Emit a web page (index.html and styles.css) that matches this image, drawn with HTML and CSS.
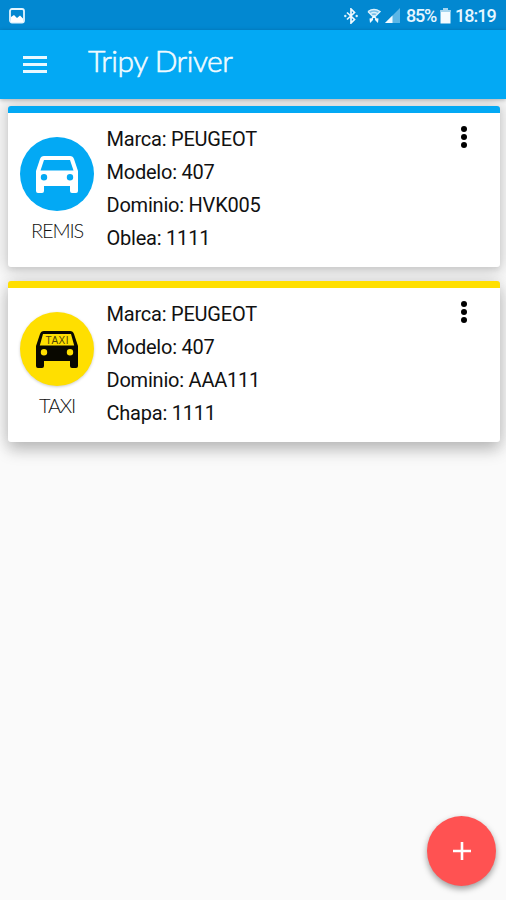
FILE: index.html
```html
<!DOCTYPE html>
<html lang="es">
<head>
<meta charset="utf-8">
<title>Tripy Driver</title>
<link rel="stylesheet" href="styles.css">
</head>
<body>
<div class="status">
  <svg class="picture" width="16" height="16" viewBox="0 0 16 16"><rect x="1" y="1" width="14" height="13.500" rx="2" fill="none" stroke="#e4f5ff" stroke-width="1.800"/><path d="M2 14V9l3-2 3 3 3-2.500 3 3V14z" fill="#fff"/></svg>
  <div class="tray">
    <svg class="bluetooth" width="16" height="16" viewBox="0 0 16 16"><path d="M4 4.500l7.500 7L8 15V1l3.500 3.500L4 11.500" fill="none" stroke="#eef9ff" stroke-width="1.700"/><circle cx="2.300" cy="8" r="1.200" fill="#d9f0fc"/><circle cx="13.700" cy="8" r="1.200" fill="#d9f0fc"/></svg>
    <svg class="wifi" width="16" height="16" viewBox="0 0 16 16"><path d="M2 4Q8-.5 14 4L8 10.500z" fill="#73bee8"/><path d="M2 3.500Q8-.5 14 3.500L9.500 8h-3L2 3.500M4.500 5.500Q8 3.500 11.500 5.500" fill="none" stroke="#d9f0fc" stroke-width="1.400"/><path d="M8 7l2.500 3H5.500zM3.500 10.500L7 10v2l-3 3zM9 10l3.500.5-.5 4.500-3-3z" fill="#eef9ff"/></svg>
    <svg class="signal" width="16" height="16" viewBox="0 0 16 16"><path d="M0 15L15 0v15z" fill="#5cb6e6"/><path d="M0 15L7.500 7.500V15z" fill="#f2faff"/></svg>
    <span class="percent">85%</span>
    <svg class="battery" width="11" height="16" viewBox="0 0 11 16"><path d="M3 0h5v2h2.500v13.500H.5V2H3z" fill="#f4fbff"/><path d="M3 0h5v2h2.500v2H.5V2H3z" fill="#a5d5ef"/></svg>
    <span class="clock">18:19</span>
  </div>
</div>
<header class="appbar">
  <div class="burger"><i></i><i></i><i></i></div>
  <h1>Tripy Driver</h1>
</header>
<main class="list">
  <article class="card remis">
    <div class="kind">
      <div class="badge">
        <svg width="42" height="37" viewBox="0 0 42 37"><path fill-rule="evenodd" d="M8 0h26q3 0 4 3l4 12v20q0 2-2 2h-4q-2 0-2-2v-5H8v5q0 2-2 2H2q-2 0-2-2V15L4 3q1-3 4-3zM8 4L4.500 14.500h33L34 4zM8 18a3.200 3.200 0 1 0 0 6.400a3.200 3.200 0 1 0 0-6.400zM34 18a3.200 3.200 0 1 0 0 6.400a3.200 3.200 0 1 0 0-6.400z" fill="#fff"/></svg>
      </div>
      <span class="label">REMIS</span>
    </div>
    <div class="details">
      <p>Marca: PEUGEOT</p><p>Modelo: 407</p><p>Dominio: HVK005</p><p>Oblea: 1111</p>
    </div>
    <div class="more"><i></i><i></i><i></i></div>
  </article>
  <article class="card taxi">
    <div class="kind">
      <div class="badge">
        <svg width="42" height="37" viewBox="0 0 42 37"><path fill-rule="evenodd" d="M8 0h26q3 0 4 3l4 12v20q0 2-2 2h-4q-2 0-2-2v-5H8v5q0 2-2 2H2q-2 0-2-2V15L4 3q1-3 4-3zM7 3L3.800 14.500h34.400L35 3zM8 18a3.200 3.200 0 1 0 0 6.400a3.200 3.200 0 1 0 0-6.400zM34 18a3.200 3.200 0 1 0 0 6.400a3.200 3.200 0 1 0 0-6.400z" fill="#090800"/><text class="sign" x="21" y="12.800" text-anchor="middle" textLength="23">TAXI</text></svg>
      </div>
      <span class="label">TAXI</span>
    </div>
    <div class="details">
      <p>Marca: PEUGEOT</p><p>Modelo: 407</p><p>Dominio: AAA111</p><p>Chapa: 1111</p>
    </div>
    <div class="more"><i></i><i></i><i></i></div>
  </article>
</main>
<div class="fab"><svg width="18" height="18" viewBox="0 0 18 18"><path d="M9 0v18M0 9h18" stroke="#fff" stroke-width="2.600"/></svg></div>
</body>
</html>
```
FILE: styles.css
```css
* { box-sizing: border-box; }
body {
  margin: 0;
  height: 900px;
  overflow: hidden;
  background: #fafafa;
  font-family: Roboto, "Liberation Sans", sans-serif;
  color: #111;
}
.status {
  height: 30px;
  background: #0288d1;
  display: flex;
  align-items: center;
  justify-content: space-between;
  padding: 2px 9px 0;
  color: #e6f6ff;
  font-size: 18px;
  font-weight: 500;
  line-height: 28px;
}
.tray { display: flex; align-items: center; }
.wifi { margin-left: 7px; }
.signal { margin-left: 3px; }
.percent { margin-left: 5px; width: 32px; letter-spacing: -1.2px; }
.battery { margin-left: 2px; }
.clock { margin-left: 4px; width: 42px; letter-spacing: -1px; white-space: nowrap; }
.appbar {
  position: relative;
  z-index: 1;
  height: 69px;
  background: #03a9f4;
  display: flex;
  align-items: center;
  padding-left: 23px;
  box-shadow: 0 1px 4px rgba(0, 0, 0, .28);
}
.burger {
  width: 24px;
  margin-bottom: 1px;
  display: flex;
  flex-direction: column;
  gap: 4px;
}
.burger i { height: 3px; background: #e9f8ff; }
h1 {
  margin: 0 0 9px 41px;
  color: #f2fbff;
  font: 300 30px/36px Lato, sans-serif;
  letter-spacing: -0.5px;
  -webkit-text-stroke: 0.6px #f2fbff;
}
.list {
  display: flex;
  flex-direction: column;
  gap: 14px;
  padding: 7px 6px 0 8px;
}
.card {
  height: 161px;
  display: flex;
  background: #fff;
  border-top: 7px solid #03a9f4;
  border-radius: 3px;
  box-shadow: 0 8px 16px rgba(0, 0, 0, .22), 0 0 18px rgba(0, 0, 0, .12);
}
.remis { box-shadow: 0 0 16px 4px rgba(0, 0, 0, .16), 0 3px 5px rgba(0, 0, 0, .08); }
.taxi { border-top-color: #ffdf00; clip-path: inset(-14px -8px -40px -8px); }
.kind {
  width: 98px;
  padding-top: 24px;
  display: flex;
  flex-direction: column;
  align-items: center;
}
.badge {
  width: 74px;
  height: 74px;
  border-radius: 50%;
  background: #03a9f4;
  display: flex;
  align-items: center;
  justify-content: center;
}
.taxi .badge { background: #ffdf00; box-shadow: 0 1px 3px rgba(0, 0, 0, .2); }
.sign { font: 400 10px "Liberation Sans", sans-serif; fill: #4d4307; }
.label {
  margin-top: 7px;
  font: 300 20px/24px Lato, sans-serif;
  letter-spacing: -1.2px;
}
.details { flex: 1; padding-top: 10px; }
.details p {
  margin: 0 0 0 0.5px;
  font-size: 20px;
  line-height: 33px;
  letter-spacing: -0.22px;
  white-space: nowrap;
}
.more {
  width: 7px;
  margin: 13px 32px 0 0;
  display: flex;
  flex-direction: column;
  gap: 2px;
}
.more i { width: 6px; height: 6px; border-radius: 50%; background: #000; }
.fab {
  position: absolute;
  right: 10px;
  bottom: 14px;
  width: 69px;
  height: 70px;
  border-radius: 50%;
  background: #ff5252;
  display: flex;
  align-items: center;
  justify-content: center;
  box-shadow: 0 3px 6px rgba(0, 0, 0, .38);
}
```
